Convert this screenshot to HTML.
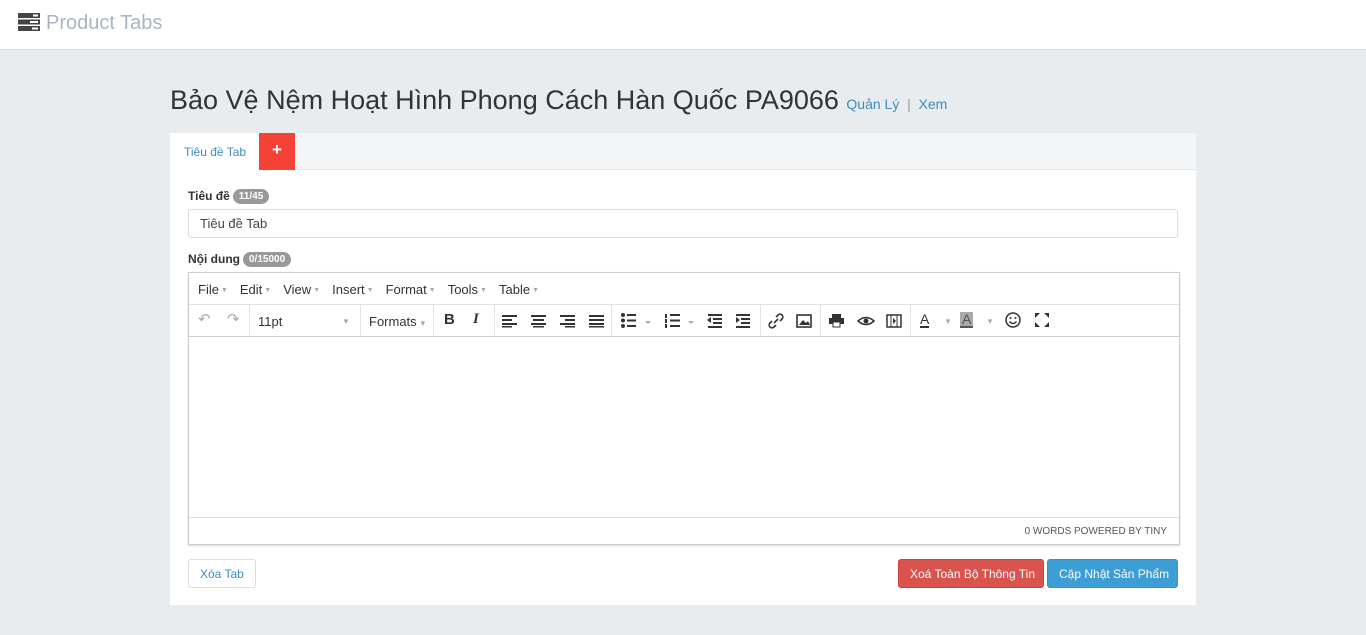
<!DOCTYPE html>
<html><head><meta charset="utf-8"><style>
*{box-sizing:border-box;margin:0;padding:0}
body{width:1366px;height:635px;background:#e9ecef;font-family:"Liberation Sans",Arial,sans-serif;position:relative;overflow:hidden;color:#333}
.hdr{position:absolute;left:0;top:0;width:1366px;height:50px;background:#fff;border-bottom:1px solid #d8dadd}
.hdr .t{position:absolute;left:46px;top:12px;font-size:20px;color:#aab4c0}
.abs{position:absolute}
h1{position:absolute;left:170px;top:85px;font-size:27px;font-weight:normal;color:#333;white-space:nowrap}
h1 small{font-size:14px;color:#3c8dbc}
.panel{position:absolute;left:170px;top:133px;width:1026px;height:472px;background:#fff}
.tabs{position:absolute;left:0;top:0;width:1026px;height:37px;background:#f4f5f7;border-bottom:1px solid #e3e5e8}
.lbl{font-size:12px;font-weight:bold;color:#333}
.badge{display:inline-block;background:#999;color:#fff;font-size:10px;font-weight:bold;border-radius:9px;padding:2px 6px;margin-left:3px;vertical-align:1px}
.inp{position:absolute;left:18px;top:76px;width:990px;height:29px;border:1px solid #ddd;border-radius:3px;font-size:13px;padding:6px 11px;color:#444}
.ed{position:absolute;left:18px;top:139px;width:992px;height:273px;border:1px solid #ccc;box-shadow:0 1px 2px rgba(0,0,0,.15)}
.mb{height:32px;border-bottom:1px solid #e2e2e2;font-size:13px;color:#333;padding:9px 0 0 9px;white-space:nowrap}
.mb span{margin-right:12px}
.mb i{font-style:normal;color:#aaa;font-size:7px;margin-left:2px;vertical-align:2px}
.tb{height:32px;border-bottom:1px solid #ccc;position:relative;font-size:13px}
.sep{position:absolute;top:0;width:1px;height:31px;background:#e2e2e2}
.ic{position:absolute;top:8px}
.st{position:absolute;left:0;top:244px;width:990px;height:28px;border-top:1px solid #ddd;font-size:10px;color:#555;text-align:right;padding:8px 12px 0 0}
.btn{position:absolute;top:426px;height:29px;border-radius:3px;font-size:12px;padding:7px 11px;white-space:nowrap}
</style></head><body>
<div class="hdr">
<svg class="abs" style="left:18px;top:13px" width="22" height="18" viewBox="0 0 22 18"><rect x="0" y="0" width="22" height="5" fill="#444"/><rect x="0" y="6.5" width="22" height="5" fill="#444"/><rect x="0" y="13" width="22" height="5" fill="#444"/><rect x="15" y="1.5" width="5" height="2" fill="#fff"/><rect x="12" y="8" width="8" height="2" fill="#fff"/><rect x="14" y="14.5" width="6" height="2" fill="#fff"/></svg>
<div class="t">Product Tabs</div></div>
<h1>Bảo Vệ Nệm Hoạt Hình Phong Cách Hàn Quốc PA9066 <small>Quản Lý <span style="color:#999">&nbsp;|&nbsp;</span> Xem</small></h1>
<div class="panel">
<div class="tabs">
<div class="abs" style="left:0;top:0;width:89px;height:37px;background:#fff;font-size:12px;color:#3c8dbc;padding:12px 0 0 14px">Tiêu đề Tab</div>
<div class="abs" style="left:89px;top:0;width:36px;height:37px;background:#f44336;color:#fff;font-size:17px;font-weight:bold;text-align:center;line-height:34px">+</div>
</div>
<div class="abs lbl" style="left:18px;top:56px">Tiêu đề<span class="badge">11/45</span></div>
<div class="inp">Tiêu đề Tab</div>
<div class="abs lbl" style="left:18px;top:119px">Nội dung<span class="badge">0/15000</span></div>
<div class="ed">
<div class="mb"><span>File<i>▼</i></span><span>Edit<i>▼</i></span><span>View<i>▼</i></span><span>Insert<i>▼</i></span><span>Format<i>▼</i></span><span>Tools<i>▼</i></span><span>Table<i>▼</i></span></div>
<div class="tb">
<span class="ic" style="left:9px;color:#aaa;font-size:15px;top:5px">↶</span><span class="ic" style="left:38px;color:#aaa;font-size:15px;top:5px">↷</span>
<div class="sep" style="left:60px"></div>
<span class="ic" style="left:69px;top:9px">11pt</span><span class="ic" style="left:153px;color:#aaa;font-size:8px;top:12px">▼</span>
<div class="sep" style="left:171px"></div>
<span class="ic" style="left:180px;top:9px">Formats<i style="font-style:normal;color:#aaa;font-size:8px"> ▼</i></span>
<div class="sep" style="left:244px"></div>
<span class="ic" style="left:255px;font-weight:bold;font-size:15px;top:6px">B</span>
<span class="ic" style="left:284px;font-style:italic;font-weight:bold;font-size:15px;top:6px;font-family:'Liberation Serif',serif">I</span>
<div class="sep" style="left:305px"></div>
<svg class="abs" style="left:313px;top:9px" width="110" height="14"><g fill="#333"><rect x="0" y="1" width="15" height="2"/><rect x="0" y="5" width="10" height="2"/><rect x="0" y="9" width="15" height="2"/><rect x="0" y="12" width="10" height="1.5"/>
<rect x="29" y="1" width="15" height="2"/><rect x="31" y="5" width="11" height="2"/><rect x="29" y="9" width="15" height="2"/><rect x="31" y="12" width="11" height="1.5"/>
<rect x="58" y="1" width="15" height="2"/><rect x="63" y="5" width="10" height="2"/><rect x="58" y="9" width="15" height="2"/><rect x="63" y="12" width="10" height="1.5"/>
<rect x="87" y="1" width="15" height="2"/><rect x="87" y="5" width="15" height="2"/><rect x="87" y="9" width="15" height="2"/><rect x="87" y="12" width="15" height="1.5"/></g></svg>
<div class="sep" style="left:422px"></div>
<svg class="abs" style="left:432px;top:8px" width="140" height="16"><g fill="#333"><circle cx="2" cy="2" r="2"/><circle cx="2" cy="7.5" r="2"/><circle cx="2" cy="13" r="2"/><rect x="6" y="1" width="9" height="2"/><rect x="6" y="6.5" width="9" height="2"/><rect x="6" y="12" width="9" height="2"/>
<rect x="44" y="1" width="2" height="4"/><rect x="44" y="6" width="2" height="4"/><rect x="44" y="11" width="2" height="4"/><rect x="49" y="1" width="10" height="2"/><rect x="49" y="6.5" width="10" height="2"/><rect x="49" y="12" width="10" height="2"/>
<rect x="87" y="1" width="14" height="2"/><rect x="92" y="5" width="9" height="2"/><rect x="92" y="9" width="9" height="2"/><rect x="87" y="13" width="14" height="2"/><path d="M90 4v6l-4-3z"/>
<rect x="115" y="1" width="14" height="2"/><rect x="120" y="5" width="9" height="2"/><rect x="120" y="9" width="9" height="2"/><rect x="115" y="13" width="14" height="2"/><path d="M115 4v6l4-3z"/></g>
<g fill="#aaa"><path d="M24 8h6l-3 3z"/><path d="M67 8h6l-3 3z"/></g></svg>
<div class="sep" style="left:571px"></div>
<svg class="abs" style="left:579px;top:8px" width="60" height="16"><path d="M6 10l4-4M4 8l-2 2a2.5 2.5 0 0 0 4 4l2-2M12 8l2-2a2.5 2.5 0 0 0-4-4l-2 2" stroke="#333" stroke-width="1.6" fill="none"/><rect x="29" y="2" width="14" height="12" fill="none" stroke="#333" stroke-width="1.6"/><path d="M31 12l4-5 3 3 2-2 2 4z" fill="#333"/></svg>
<div class="sep" style="left:631px"></div>
<svg class="abs" style="left:640px;top:8px" width="80" height="16"><g fill="#333"><rect x="3" y="1" width="9" height="4"/><rect x="0" y="5" width="15" height="6"/><rect x="4" y="9" width="7" height="5" fill="#fff" stroke="#333"/></g>
<path d="M29 8q8-7 16 0q-8 7-16 0z" fill="none" stroke="#333" stroke-width="1.5"/><circle cx="37" cy="8" r="2.5" fill="#333"/>
<rect x="58" y="2" width="14" height="12" fill="none" stroke="#333" stroke-width="1.5"/><path d="M62 2v12M68 2v12" stroke="#333"/><path d="M64 5v6l3-3z" fill="#333"/></svg>
<div class="sep" style="left:721px"></div>
<span class="ic" style="left:731px;top:7px;font-size:14px;border-bottom:2px solid #333;line-height:14px">A</span><span class="ic" style="left:755px;color:#aaa;font-size:8px;top:12px">▼</span>
<span class="ic" style="left:771px;top:7px;font-size:14px;background:#aaa;color:#555;padding:0 2px;border-bottom:2px solid #555;line-height:14px">A</span><span class="ic" style="left:797px;color:#aaa;font-size:8px;top:12px">▼</span>
<svg class="abs" style="left:816px;top:7px" width="48" height="17"><circle cx="8" cy="8" r="7" fill="none" stroke="#333" stroke-width="1.5"/><circle cx="5.5" cy="6" r="1" fill="#333"/><circle cx="10.5" cy="6" r="1" fill="#333"/><path d="M4.5 9.5q3.5 4 7 0" fill="none" stroke="#333" stroke-width="1.4"/>
<g fill="#333"><path d="M30 1h5l-5 5z"/><path d="M44 1h-5l5 5z"/><path d="M30 15h5l-5-5z"/><path d="M44 15h-5l5-5z"/></g></svg>
</div>
<div class="st">0 WORDS POWERED BY TINY</div>
</div>
<div class="btn" style="left:18px;border:1px solid #ddd;color:#3c8dbc;background:#fff">Xóa Tab</div>
<div class="btn" style="left:728px;width:146px;background:#d9534f;border:1px solid #d43f3a;color:#fff">Xoá Toàn Bộ Thông Tin</div>
<div class="btn" style="left:877px;width:131px;background:#3c9ed4;border:1px solid #3891c4;color:#fff">Cập Nhật Sản Phẩm</div>
</div>
</body></html>
